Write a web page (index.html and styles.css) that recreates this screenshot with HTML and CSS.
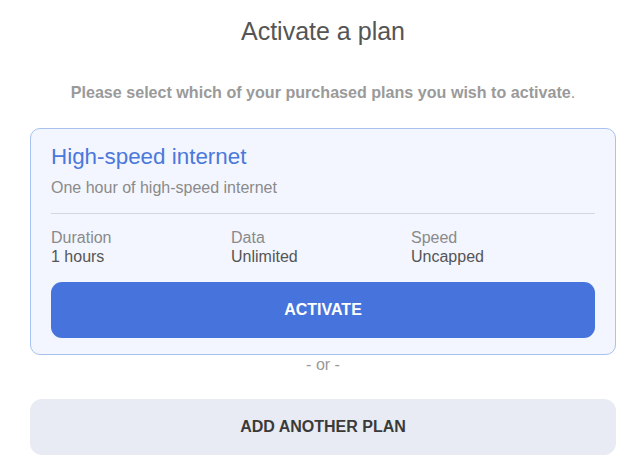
FILE: index.html
```html
<!DOCTYPE html>
<html>
<head>
<meta charset="utf-8">
<link rel="stylesheet" href="styles.css">
</head>
<body>
<div class="page">
  <h1 class="title">Activate a plan</h1>
  <p class="subtitle"><strong>Please select which of your purchased plans you wish to activate</strong>.</p>
  <div class="card">
    <h2 class="plan-name">High-speed internet</h2>
    <p class="plan-desc">One hour of high-speed internet</p>
    <div class="divider"></div>
    <div class="specs">
      <div class="spec"><div class="spec-label">Duration</div><div class="spec-value">1 hours</div></div>
      <div class="spec"><div class="spec-label">Data</div><div class="spec-value">Unlimited</div></div>
      <div class="spec"><div class="spec-label">Speed</div><div class="spec-value">Uncapped</div></div>
    </div>
    <button class="btn btn-primary">ACTIVATE</button>
  </div>
  <div class="or">- or -</div>
  <button class="btn btn-secondary">ADD ANOTHER PLAN</button>
</div>
</body>
</html>
```
FILE: styles.css
```css
* { box-sizing: border-box; }
html, body { margin: 0; padding: 0; background: #fff; }
body { font-family: "Liberation Sans", Arial, sans-serif; }
.page { padding: 0 14px 0 30px; display: flex; flex-direction: column; }
.title {
  margin: 0; padding-top: 16px;
  font-size: 25px; line-height: 30px; font-weight: normal;
  color: #555; text-align: center;
}
.subtitle {
  margin: 37px 0 0; font-size: 16.1px; line-height: 18px;
  color: #9a9a9a; text-align: center;
}
.subtitle strong { color: #9a9a9a; }
.card {
  margin-top: 27px;
  border: 1px solid #a8c2f0; border-radius: 10px;
  background: #f3f6fe;
  padding: 15px 20px 16px;
  display: flex; flex-direction: column;
}
.plan-name {
  margin: 0; font-size: 22.4px; line-height: 26px; font-weight: normal;
  color: #4a78db;
}
.plan-desc {
  margin: 8px 0 0; font-size: 16px; line-height: 20px; color: #8a8a8a;
}
.divider { margin-top: 15px; border-top: 1px solid #d4d7de; }
.specs {
  margin-top: 14px;
  display: grid; grid-template-columns: 180px 180px 1fr;
  font-size: 16px; line-height: 19px;
}
.spec-label { color: #8a8a8a; }
.spec-value { color: #555; }
.btn {
  display: block; width: 100%; height: 56px;
  border: 0; border-radius: 11px;
  font-family: inherit; font-size: 16px; font-weight: bold;
  cursor: pointer;
}
.btn-primary { margin-top: 16px; background: #4674dc; color: #fff; }
.or {
  margin-top: 1px; text-align: center;
  font-size: 16px; line-height: 18px; color: #999;
}
.btn-secondary { margin-top: 25px; background: #e8ebf3; color: #3a3a3a; border-radius: 12px; }
```
